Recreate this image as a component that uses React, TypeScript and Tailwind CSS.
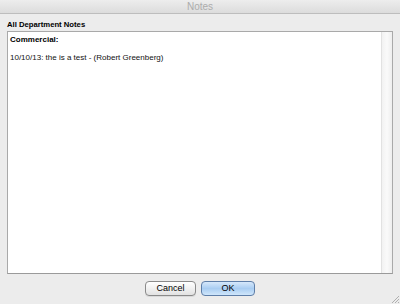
import React from 'react';

const App: React.FC = () => {
  return (
    <div
      className="w-[400px] h-[304px] bg-[#ececec] flex flex-col overflow-hidden text-black"
      style={{ fontFamily: '"Liberation Sans", Arial, sans-serif' }}
    >
      {/* Title bar */}
      <div className="h-[14px] shrink-0 bg-gradient-to-b from-[#ededed] to-[#dcdcdc] border-b border-[#bdbdbd] flex items-center justify-center">
        <span className="text-[10px] leading-none text-[#acacac]">Notes</span>
      </div>

      <div className="flex-1 flex flex-col px-[7px] pt-[6px]">
        <div className="text-[7.7px] font-bold leading-none h-[11px] pt-[1px]">All Department Notes</div>

        {/* Notes area */}
        <div className="h-[243px] bg-white border border-[#a9a9a9] border-b-[#9a9a9a] flex">
          <div className="flex-1 px-[2px] pt-[3px]">
            <div className="text-[8px] font-bold leading-[10px]">Commercial:</div>
            <div className="text-[8px] leading-[10px] mt-[8px] text-[#111]">10/10/13: the is a test - (Robert Greenberg)</div>
          </div>
          <div className="w-[11px] bg-gradient-to-r from-[#f2f2f2] via-[#fafafa] to-[#eeeeee] border-l border-[#e2e2e2]" />
        </div>

        {/* Buttons */}
        <div className="flex justify-center gap-[5px] mt-[7px]">
          <button className="w-[51px] h-[15px] rounded-[4px] border border-[#8a8a8a] bg-gradient-to-b from-[#ffffff] to-[#e2e2e2] text-[9px] leading-none shadow-[0_1px_0_rgba(0,0,0,0.08)]">
            Cancel
          </button>
          <button className="w-[54px] h-[15px] rounded-[4px] border border-[#5e7ea8] bg-gradient-to-b from-[#d6e8fb] via-[#a9cdf2] to-[#cfe6fb] text-[9px] leading-none">
            OK
          </button>
        </div>
      </div>

      {/* Resize grip */}
      <div className="relative h-0">
        <svg className="absolute right-0 bottom-0" width="10" height="10" viewBox="0 0 10 10">
          <path d="M2 9 L9 2 M5 9 L9 5 M8 9 L9 8" stroke="#a0a0a0" strokeWidth="0.8" />
        </svg>
      </div>
    </div>
  );
};

export default App;
